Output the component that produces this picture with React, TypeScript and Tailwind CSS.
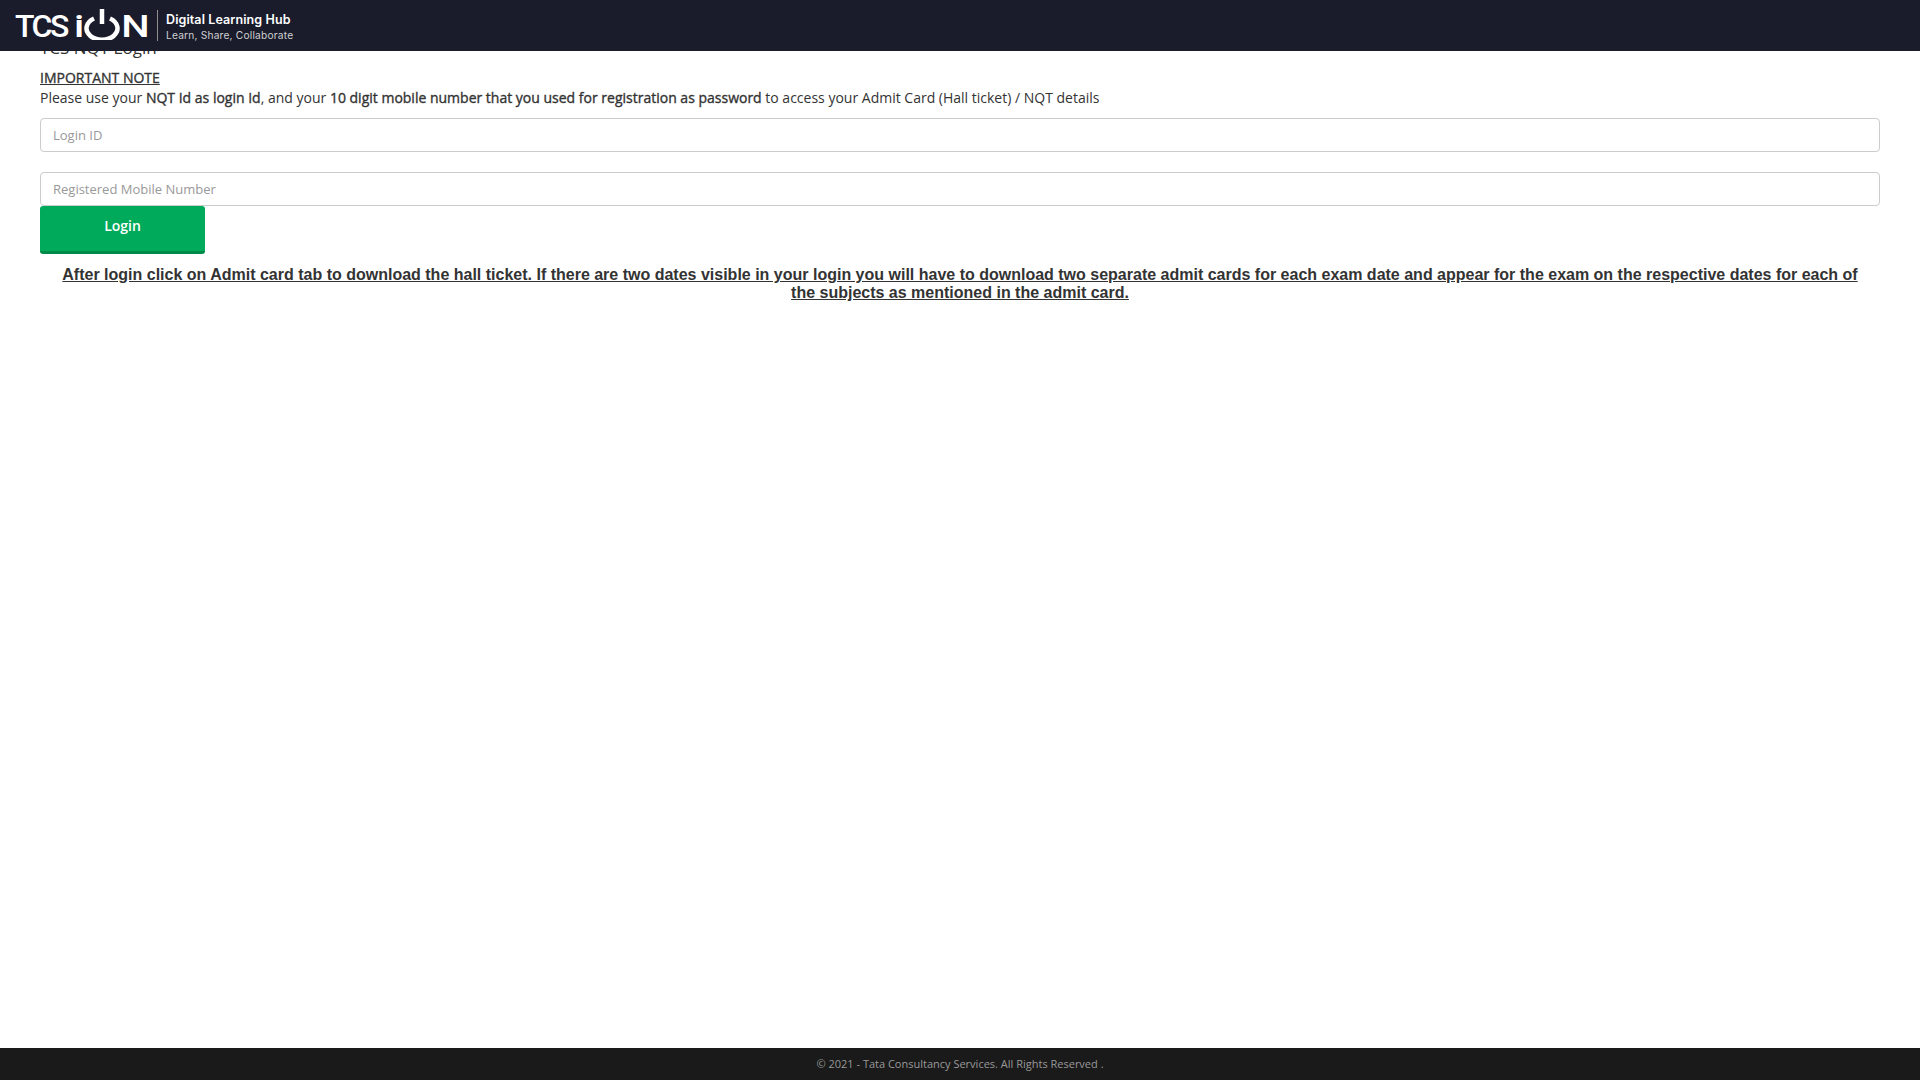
const openSans = 'font-["Open_Sans",sans-serif]';

function Logo() {
  return (
    <div className="flex items-center h-full pl-[15px]">
      <div className="flex items-center w-[134px] text-white font-['Roboto',sans-serif] font-medium text-[32px] leading-none">
        <span className="tracking-[-2.5px]">TCS</span>
        <span className="ml-[8px] scale-x-125">i</span>
        <svg width="36" height="32" viewBox="0 0 36 32" className="ml-[1px] shrink-0 -mt-[3px]" fill="none" stroke="#fff" strokeWidth="4.5">
          <path d="M10 10.5 A 15.5 11.5 0 1 0 26 10.5" />
          <path d="M18 1 V 16" />
        </svg>
        <span className="ml-[4px] scale-x-125">N</span>
      </div>
      <div className="w-px h-[31px] bg-[#8f8f8f] ml-[8px] mr-[8px]" />
      <div className="flex flex-col font-['Inter',sans-serif] text-white pt-[1px]">
        <span className="text-[12.5px] leading-[17px] font-semibold tracking-[0.1px]">Digital Learning Hub</span>
        <span className="text-[10.2px] leading-[14px] text-[#d0d0d0] tracking-[0.2px]">Learn, Share, Collaborate</span>
      </div>
    </div>
  );
}

export default function App() {
  return (
    <div className={`flex flex-col min-h-screen bg-white text-[#333] text-[14px] ${openSans}`}>
      <header className="fixed top-0 left-0 right-0 h-[51px] bg-[#1a1c2c] z-10">
        <Logo />
      </header>

      <main className="flex-1 px-[40px] pt-[38px]">
        <h4 className="text-[17px] leading-[20px] text-[#333]">TCS NQT Login</h4>
        <div className="mt-[10px] leading-[20px]">
          <div className="underline [-webkit-text-stroke:0.35px_#333]">IMPORTANT NOTE</div>
          <p>
            Please use your <b className="font-normal [-webkit-text-stroke:0.35px_#333]">NQT Id as login Id</b>, and your{' '}
            <b className="font-normal [-webkit-text-stroke:0.35px_#333]">10 digit mobile number that you used for registration as password</b> to access your Admit Card (Hall ticket) / NQT details
          </p>
        </div>

        <input
          placeholder="Login ID"
          className="block w-full h-[34px] mt-[10px] px-[12px] border border-[#ccc] rounded-[4px] text-[13px] outline-none placeholder:text-[#999]"
        />
        <input
          placeholder="Registered Mobile Number"
          className="block w-full h-[34px] mt-[20px] px-[12px] border border-[#ccc] rounded-[4px] text-[13px] outline-none placeholder:text-[#999]"
        />
        <button className="block w-[165px] h-[48px] pb-[6px] bg-[#00aa5b] border-b-[3px] border-[#008a4a] rounded-[3px] text-white font-semibold text-[14px]">
          Login
        </button>

        <p className="mt-[12px] px-[15px] text-center font-['Liberation_Sans',sans-serif] font-bold text-[16px] leading-[18px] underline">
          After login click on Admit card tab to download the hall ticket. If there are two dates visible in your login you will have to download two separate admit cards for each exam date and appear for the exam on the respective dates for each of the subjects as mentioned in the admit card.
        </p>
      </main>

      <footer className="h-[32px] bg-[#1a1a1a] flex items-center justify-center text-[11px] text-[#999]">
        © 2021 - Tata Consultancy Services. All Rights Reserved .
      </footer>
    </div>
  );
}
